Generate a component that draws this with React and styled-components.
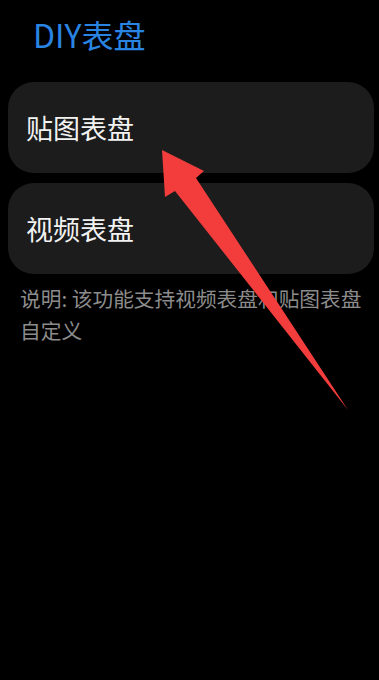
import React from 'react';
import styled, { createGlobalStyle } from 'styled-components';

const GlobalStyle = createGlobalStyle`
  html, body {
    margin: 0;
    padding: 0;
    background: #000;
  }
  body {
    font-family: "Noto Sans CJK SC", "Noto Sans", sans-serif;
  }
`;

const Page = styled.div`
  position: relative;
  width: 379px;
  height: 680px;
  background: #000;
  overflow: hidden;
`;

const Title = styled.h1`
  margin: 0;
  padding: 14px 0 0 33px;
  height: 68px;
  box-sizing: border-box;
  font-size: 32px;
  font-weight: 400;
  line-height: 40px;
  color: #2a84e2;
`;

const List = styled.div`
  display: flex;
  flex-direction: column;
  gap: 10px;
  padding: 14px 5px 0 8px;
`;

const Card = styled.div`
  height: 91px;
  border-radius: 26px;
  background: #1c1c1c;
  display: flex;
  align-items: center;
  padding-left: 18px;
  font-size: 27px;
  color: #f2f2f2;
`;

const Note = styled.p`
  margin: 8px 12px 0 20px;
  font-size: 20.7px;
  line-height: 32px;
  color: #8c8c8c;
`;

const Arrow = styled.svg`
  position: absolute;
  left: 0;
  top: 0;
  pointer-events: none;
`;

export default function App() {
  return (
    <Page>
      <GlobalStyle />
      <Title>DIY表盘</Title>
      <List>
        <Card>贴图表盘</Card>
        <Card>视频表盘</Card>
      </List>
      <Note>说明: 该功能支持视频表盘和贴图表盘自定义</Note>
      <Arrow width="379" height="680" viewBox="0 0 379 680">
        <polygon
          points="162,150 204,171 196,178 348,410 175,191 165,197"
          fill="#f33c3c"
        />
      </Arrow>
    </Page>
  );
}
